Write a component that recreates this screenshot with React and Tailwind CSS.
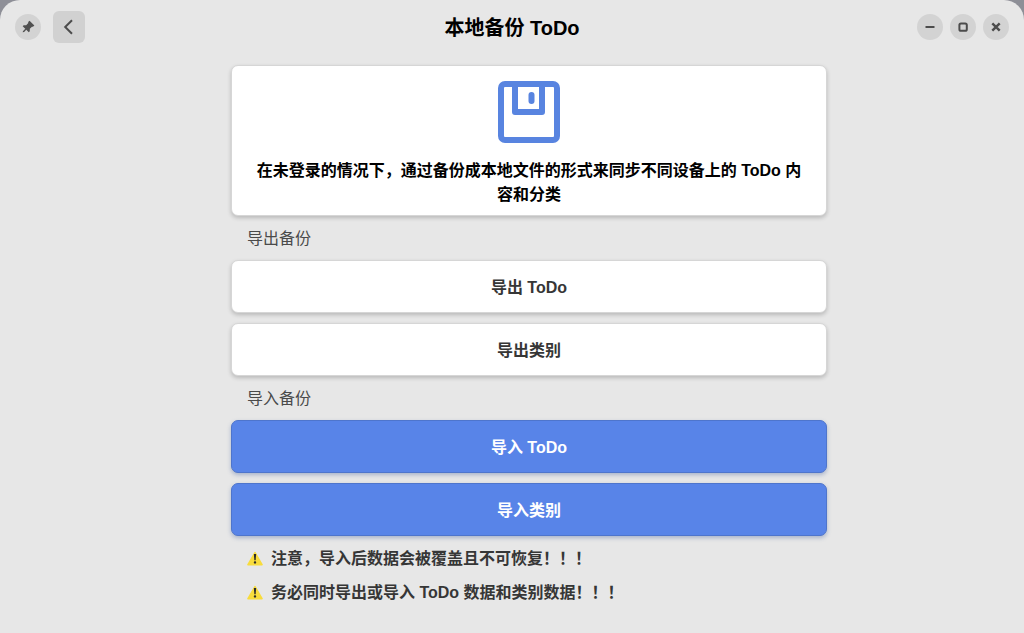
import { useState } from 'react';

function PinIcon() {
  return (
    <svg className="h-4 w-4 text-[#505050]" viewBox="0 0 16 16" fill="currentColor" aria-hidden="true">
      <g transform="rotate(45 8 8)">
        <path d="M4.6 2.4h6.8v2l-.8.6v3l1.7 1.8v1.4H3.7V9.8L5.4 8V5l-.8-.6z" />
        <path d="M7.3 10.8h1.4v3.4L8 15.6l-.7-1.4z" />
      </g>
    </svg>
  );
}

function FloppyIcon() {
  return (
    <svg className="h-[62px] w-[62px] text-[#5884e0]" viewBox="0 0 62 62" fill="none" stroke="currentColor" strokeWidth="6" aria-hidden="true">
      <rect x="3" y="3" width="56" height="56" rx="4" />
      <path d="M17 3v28h27V3" strokeLinejoin="round" />
      <path d="M33.5 14v6" strokeLinecap="round" />
    </svg>
  );
}

function WarningIcon() {
  return (
    <svg className="h-4 w-4 shrink-0" viewBox="0 0 17 16" aria-hidden="true">
      <path d="M8.5 1.2 16 14H1z" fill="#f8dc3c" stroke="#f8dc3c" strokeWidth="1.6" strokeLinejoin="round" />
      <path d="M7.3 2.6h2.4l-.5 6.6H7.8z" fill="#2b2b2b" />
      <circle cx="8.5" cy="11.6" r="1.3" fill="#2b2b2b" />
    </svg>
  );
}

function RoundButton({ label, children, ...props }) {
  return (
    <button
      type="button"
      aria-label={label}
      className="flex h-[26px] w-[26px] items-center justify-center rounded-full bg-[#d3d3d3] text-[#4c4c4c] hover:bg-[#c8c8c8]"
      {...props}
    >
      {children}
    </button>
  );
}

function TitleBar() {
  const [pinned, setPinned] = useState(false);

  return (
    <header className="grid h-[54px] grid-cols-[1fr_auto_1fr] items-center px-[15px]">
      <div className="flex items-center gap-3">
        <RoundButton label="置顶" aria-pressed={pinned} onClick={() => setPinned(!pinned)}>
          <PinIcon />
        </RoundButton>
        <button
          type="button"
          aria-label="返回"
          className="flex h-8 w-8 items-center justify-center rounded-md bg-[#d1d1d1] text-[#4c4c4c] hover:bg-[#c8c8c8]"
        >
          <svg className="h-4 w-4" viewBox="0 0 16 16" fill="none" stroke="currentColor" strokeWidth="2" aria-hidden="true">
            <path d="M11 1.2 4.2 8l6.8 6.8" />
          </svg>
        </button>
      </div>

      <h1 className="pt-0.5 text-xl font-bold text-black">本地备份 ToDo</h1>

      <div className="flex items-center justify-end gap-[7px]">
        <RoundButton label="最小化">
          <svg className="h-4 w-4" viewBox="0 0 16 16" stroke="currentColor" strokeWidth="2" aria-hidden="true">
            <path d="M3.5 8h9" />
          </svg>
        </RoundButton>
        <RoundButton label="最大化">
          <svg className="h-4 w-4" viewBox="0 0 16 16" fill="none" stroke="currentColor" strokeWidth="2" aria-hidden="true">
            <rect x="4.4" y="4.4" width="7.4" height="7.4" rx="1.6" />
          </svg>
        </RoundButton>
        <RoundButton label="关闭">
          <svg className="h-4 w-4" viewBox="0 0 16 16" stroke="currentColor" strokeWidth="2.4" aria-hidden="true">
            <path d="m4.3 4.3 7.4 7.4M11.7 4.3l-7.4 7.4" />
          </svg>
        </RoundButton>
      </div>
    </header>
  );
}

function ActionButton({ primary, children }) {
  return (
    <button
      type="button"
      className={`h-[53px] w-full rounded-[7px] border pt-0.5 text-base font-bold ${
        primary
          ? 'border-[#4e75cc] bg-[#5884e8] text-white shadow-[0_2px_4px_rgba(50,80,150,0.35)] hover:bg-[#4c79de]'
          : 'border-[#d6d6d6] bg-white text-[#363636] shadow-[0_2px_4px_rgba(0,0,0,0.2)] hover:bg-gray-50'
      }`}
    >
      {children}
    </button>
  );
}

export default function App() {
  const sections = [
    { title: '导出备份', actions: ['导出 ToDo', '导出类别'], primary: false },
    { title: '导入备份', actions: ['导入 ToDo', '导入类别'], primary: true }
  ];

  const warnings = [
    '注意，导入后数据会被覆盖且不可恢复！！！',
    '务必同时导出或导入 ToDo 数据和类别数据！！！'
  ];

  return (
    <div lang="zh-CN" className="min-h-screen bg-[#8e8f97] font-['Liberation_Sans','Noto_Sans_CJK_SC',sans-serif]">
      <div className="min-h-screen rounded-t-[20px] bg-[#e7e7e7]">
        <TitleBar />

        <main className="pt-[11px] pb-6 pl-[34px]">
          <div className="mx-auto max-w-[596px]">
            <div className="flex flex-col items-center gap-4 rounded-[7px] border border-[#d6d6d6] bg-white px-[18px] pt-[15px] pb-2 text-center shadow-[0_2px_4px_rgba(0,0,0,0.2)]">
              <FloppyIcon />
              <p className="text-base leading-6 font-bold text-black">
                在未登录的情况下，通过备份成本地文件的形式来同步不同设备上的 ToDo 内容和分类
              </p>
            </div>

            {sections.map((section) => (
              <section key={section.title}>
                <h2 className="flex h-[44px] items-center px-4 pt-0.5 text-base text-[#4a4a4a]">{section.title}</h2>
                <div className="space-y-[10px]">
                  {section.actions.map((action) => (
                    <ActionButton key={action} primary={section.primary}>
                      {action}
                    </ActionButton>
                  ))}
                </div>
              </section>
            ))}

            <ul className="mt-[11px] space-y-[10px] px-4">
              {warnings.map((warning) => (
                <li key={warning} className="flex items-center gap-2 text-base leading-6 font-bold text-[#363636]">
                  <WarningIcon />
                  {warning}
                </li>
              ))}
            </ul>
          </div>
        </main>
      </div>
    </div>
  );
}
